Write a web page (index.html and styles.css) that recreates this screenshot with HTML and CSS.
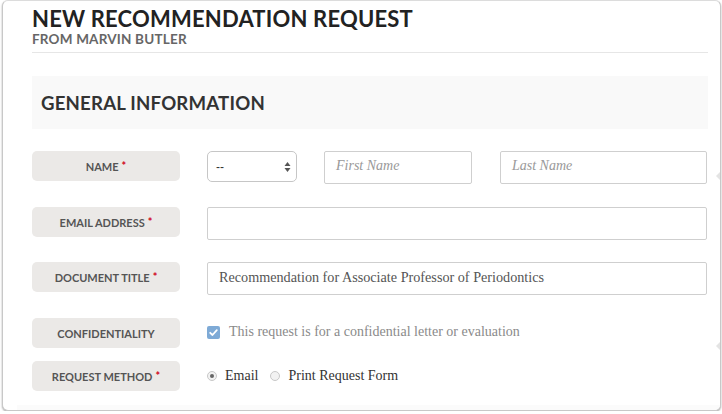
FILE: index.html
```html
<!DOCTYPE html>
<html>
<head>
<meta charset="utf-8">
<link rel="stylesheet" href="styles.css">
</head>
<body>
<div class="card">
  <header class="head">
    <h1 class="title">NEW RECOMMENDATION REQUEST</h1>
    <div class="subtitle">FROM MARVIN BUTLER</div>
  </header>
  <section class="section">
    <h2 class="section-title">GENERAL INFORMATION</h2>
  </section>
  <div class="form">
    <div class="row row-name">
      <div class="label">NAME <span class="req">*</span></div>
      <div class="fields">
        <div class="select"><span>--</span>
          <svg class="arrows" width="7" height="12" viewBox="0 0 7 12"><path d="M3.5 1 L6.5 5 L0.5 5 Z" fill="#555"/><path d="M3.5 11 L6.5 7 L0.5 7 Z" fill="#555"/></svg>
        </div>
        <div class="input first ph">First Name</div>
        <div class="input last ph">Last Name</div>
      </div>
    </div>
    <div class="row row-email">
      <div class="label">EMAIL ADDRESS <span class="req">*</span></div>
      <div class="input wide"></div>
    </div>
    <div class="row row-doc">
      <div class="label">DOCUMENT TITLE <span class="req">*</span></div>
      <div class="input wide value">Recommendation for Associate Professor of Periodontics</div>
    </div>
    <div class="row row-conf">
      <div class="label">CONFIDENTIALITY</div>
      <div class="check-line">
        <span class="checkbox"><svg width="13" height="13" viewBox="0 0 13 13"><path d="M3.2 6.8 L5.5 9 L9.8 4.2" fill="none" stroke="#fff" stroke-width="1.8" stroke-linecap="round" stroke-linejoin="round"/></svg></span>
        <span class="check-text">This request is for a confidential letter or evaluation</span>
      </div>
    </div>
    <div class="row row-method">
      <div class="label">REQUEST METHOD <span class="req">*</span></div>
      <div class="radios">
        <span class="radio on"></span><span class="radio-text">Email</span>
        <span class="radio"></span><span class="radio-text">Print Request Form</span>
      </div>
    </div>
  </div>
  <span class="nub nub-1"></span>
  <span class="nub nub-2"></span>
  <div class="foot"></div>
</div>
</body>
</html>
```
FILE: styles.css
```css
html, body { margin: 0; padding: 0; background: #fff; }
body { padding: 0 1px 0 2px; }
.card {
  box-sizing: border-box;
  height: 411px;
  border: 1px solid #c8c8c8;
  border-top-color: #dcdcdc;
  border-radius: 6px;
  box-shadow: 0 1px 2px rgba(0,0,0,0.35);
  padding: 0 12px 0 29px;
  background: #fff;
  position: relative;
  overflow: hidden;
  font-family: Lato, "Open Sans", sans-serif;
}
.head {
  padding-top: 5px;
  padding-bottom: 5px;
  border-bottom: 1px solid #e6e6e6;
}
.title {
  margin: 0;
  font-size: 22px;
  line-height: 26px;
  font-weight: 700;
  color: #222;
  letter-spacing: 0.2px;
}
.subtitle {
  font-size: 13.5px;
  line-height: 15px;
  font-weight: 700;
  color: #666;
  letter-spacing: 0.2px;
}
.section {
  margin-top: 23px;
  height: 53px;
  background: #f9f9f9;
  display: flex;
  align-items: center;
  padding-left: 9px;
}
.section-title {
  margin: 0;
  font-size: 18.6px;
  font-weight: 700;
  color: #333;
  letter-spacing: 0.2px;
}
.form { display: flex; flex-direction: column; }
.row { display: flex; align-items: flex-start; }
.row-name { margin-top: 22px; }
.row-email { margin-top: 23px; }
.row-doc { margin-top: 22px; }
.row-conf { margin-top: 23px; }
.row-method { margin-top: 13px; }
.label {
  box-sizing: border-box;
  width: 148px;
  height: 30px;
  flex: none;
  border-radius: 5px;
  background: #ebe9e7;
  color: #555;
  font-size: 11px;
  font-weight: 700;
  display: flex;
  align-items: center;
  justify-content: center;
  margin-right: 27px;
}
.req { color: #d0021b; margin-left: 3px; position: relative; top: -1px; }
.fields { display: flex; }
.select {
  box-sizing: border-box;
  width: 90px;
  height: 31px;
  border: 1px solid #c6c6c6;
  border-radius: 5px;
  display: flex;
  align-items: center;
  justify-content: space-between;
  padding: 0 5px 0 8px;
  font-family: "Liberation Sans", sans-serif;
  font-size: 12px;
  color: #333;
  margin-right: 27px;
}
.arrows { display: block; }
.input {
  box-sizing: border-box;
  height: 33px;
  border: 1px solid #cfcfcf;
  border-radius: 2px;
  font-family: "Liberation Serif", serif;
  font-size: 14px;
  display: flex;
  align-items: center;
  padding-left: 11px;
  padding-bottom: 3px;
}
.ph { font-style: italic; color: #999; }
.first { width: 148px; margin-right: 28px; }
.last { width: 207px; }
.wide { width: 500px; }
.value { color: #555; font-size: 14.2px; }
.check-line { display: flex; align-items: center; height: 28px; }
.checkbox {
  width: 13px; height: 13px;
  border-radius: 2px;
  background: #7eaad6;
  display: inline-flex;
  margin-right: 9px;
}
.check-text {
  font-family: "Liberation Serif", serif;
  font-size: 14px;
  color: #8a8a8a;
}
.radios { display: flex; align-items: center; height: 30px; }
.radio {
  box-sizing: border-box;
  width: 10px; height: 10px;
  border-radius: 50%;
  border: 1px solid #c8c8c8;
  background: #f2f2f2;
  position: relative;
  margin-right: 8px;
}
.radio.on::after {
  content: "";
  position: absolute;
  left: 2px; top: 2px;
  width: 4px; height: 4px;
  border-radius: 50%;
  background: #666;
}
.radio-text {
  font-family: "Liberation Serif", serif;
  font-size: 14px;
  color: #333;
  margin-right: 12px;
}
.nub {
  position: absolute;
  right: 0;
  width: 0; height: 0;
  border-top: 4px solid transparent;
  border-bottom: 4px solid transparent;
  border-right: 4px solid #e4e4e4;
}
.nub-1 { top: 171px; }
.nub-2 { top: 341px; }
.foot {
  position: absolute;
  left: 14px; right: 0; bottom: 0;
  height: 5px;
  background: #fbfbfb;
}
```
